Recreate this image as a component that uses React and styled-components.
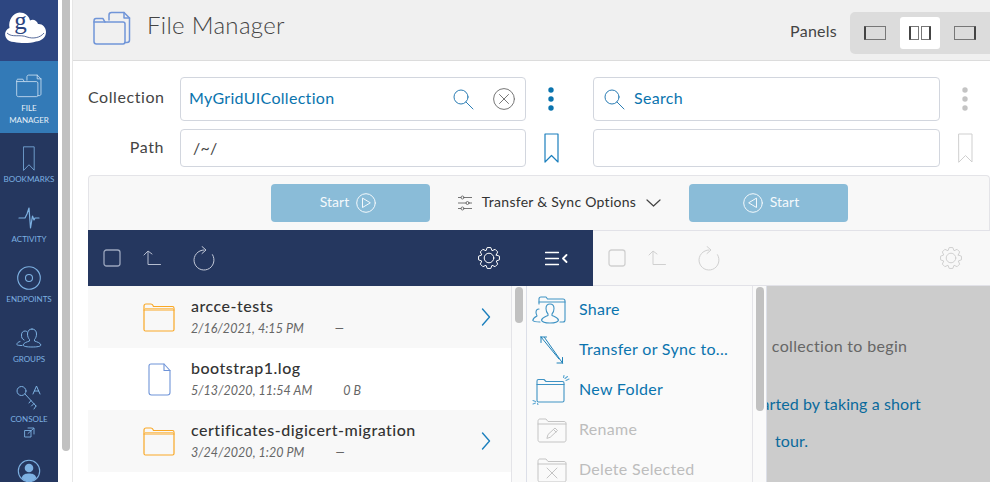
import React from "react";
import styled, { createGlobalStyle } from "styled-components";

const GlobalStyle = createGlobalStyle`
  html, body {
    margin: 0;
    height: 100%;
    overflow: hidden;
    background: #fff;
  }
  * { box-sizing: border-box; }
  body {
    font-family: Lato, "Open Sans", sans-serif;
    font-size: 16px;
    color: #333;
  }
`;

const Shell = styled.div`
  display: flex;
  width: 990px;
  height: 482px;
  overflow: hidden;
`;

const Lifted = styled.span`
  display: block;
  margin-bottom: ${(p) => p.$by || 3}px;
  ${(p) => p.$grow && "flex: 1;"}
`;

/* left nav */
const Sidebar = styled.nav`
  width: 58px;
  flex: none;
  background: #25375f;
  display: flex;
  flex-direction: column;
  align-items: stretch;
`;
const LogoBox = styled.div`
  height: 61px;
  background: #2d4681;
  flex: none;
`;
const NavItem = styled.div`
  height: ${(p) => p.$height || 60}px;
  flex: none;
  padding-top: 12px;
  display: flex;
  flex-direction: column;
  align-items: center;
  background: ${(p) => (p.$active ? "#337ab7" : "transparent")};
  color: ${(p) => (p.$active ? "#e6f0f8" : "#7db1e2")};
`;
const NavIcon = styled.div`
  height: 26px;
  display: flex;
  align-items: center;
  justify-content: center;
`;
const NavLabel = styled.div`
  margin-top: ${(p) => (p.$active ? 3 : 2)}px;
  font-size: 8px;
  line-height: 12px;
  text-align: center;
  text-transform: uppercase;
`;
const Avatar = styled.div`
  margin: 26px auto 0;
  flex: none;
`;

const Gutter = styled.div`
  width: 15px;
  flex: none;
  padding-left: 4px;
  border-right: 1px solid #e6e6e6;
`;
const PageThumb = styled.div`
  width: 8px;
  height: 451px;
  background: #c1c1c1;
  border-radius: 0 0 4px 4px;
`;

const Main = styled.main`
  flex: 1;
  min-width: 0;
  display: flex;
  flex-direction: column;
`;

/* header */
const Header = styled.header`
  height: 61px;
  flex: none;
  background: #f0f0f0;
  border-bottom: 1px solid #dcdcdc;
  display: flex;
  align-items: center;
  padding-left: 20px;
`;
const HeaderIcon = styled.div`
  margin-bottom: 4px;
`;
const Title = styled.h1`
  margin: 0 0 12px 16px;
  font-size: 24px;
  font-weight: 300;
  letter-spacing: 0.32px;
  color: #444;
`;
const PanelsLabel = styled.span`
  margin: 0 13px 0 auto;
  letter-spacing: 0.25px;
  color: #444;
`;
const PanelSwitch = styled.div`
  width: 140px;
  height: 42px;
  margin-top: 6px;
  padding: 5px;
  background: #dcdcdc;
  border-radius: 5px 0 0 5px;
  display: flex;
  gap: 5px;
`;
const PanelButton = styled.div`
  flex: 1;
  border-radius: 3px;
  display: flex;
  align-items: center;
  justify-content: center;
  background: ${(p) => (p.$active ? "#fff" : "transparent")};
`;

/* collection + path form */
const Form = styled.div`
  padding: 16px 0 8px 15px;
  display: grid;
  grid-template-columns: 76px 362px 50px 364px 50px;
  row-gap: 8px;
`;
const FieldLabel = styled.label`
  align-self: center;
  text-align: right;
  letter-spacing: 0.58px;
  color: #444;
  margin-bottom: ${(p) => p.$lift || 0}px;
`;
const Field = styled.div`
  height: ${(p) => p.$height}px;
  margin-left: ${(p) => p.$indent}px;
  border: 1px solid #d2d6de;
  border-radius: 4px;
  background: #fff;
  display: flex;
  align-items: center;
  padding-left: ${(p) => p.$pad || 8}px;
  padding-right: 10px;
  letter-spacing: 0.3px;
  color: ${(p) => p.$color || "#444"};
`;
const IconGap = styled.span`
  width: ${(p) => p.$width}px;
  flex: none;
`;
const SideAction = styled.div`
  display: flex;
  align-items: center;
  justify-content: center;
`;

const Workspace = styled.section`
  margin-left: 15px;
  flex: 1;
  min-height: 0;
  display: flex;
  flex-direction: column;
`;

/* transfer bar */
const TransferBar = styled.div`
  height: 55px;
  flex: none;
  padding: 8px 0 0 182px;
  background: #f8f8f8;
  border: 1px solid #e4e4e8;
  border-bottom: none;
  border-radius: 4px 4px 0 0;
  display: flex;
  align-items: flex-start;
`;
const StartButton = styled.div`
  width: 159px;
  height: 38px;
  padding: ${(p) => (p.$back ? "0 0 0 5px" : "0 5px 0 0")};
  background: #8abcd8;
  color: #f4f9fc;
  border-radius: 4px;
  font-size: 14px;
  display: flex;
  align-items: center;
  justify-content: center;
  gap: 7px;
`;
const OptionsToggle = styled.div`
  width: 259px;
  height: 38px;
  display: flex;
  align-items: center;
  justify-content: center;
  gap: 10px;
  font-size: 14px;
  letter-spacing: 0.27px;
  color: #333;
`;

/* panes */
const Panes = styled.div`
  flex: 1;
  min-height: 0;
  display: grid;
  grid-template-columns: 505px 397px;
`;
const Pane = styled.div`
  position: relative;
  display: flex;
  flex-direction: column;
  min-height: 0;
`;
const Toolbar = styled.div`
  height: 56px;
  flex: none;
  display: flex;
  align-items: center;
  padding: 0 ${(p) => p.$endPad}px 0 15px;
  background: ${(p) => (p.$off ? "#f8f8f8" : "#25375f")};
  border-top: ${(p) => (p.$off ? "1px solid #e2e2e8" : "none")};
  border-bottom: ${(p) => (p.$off ? "1px solid #e2e2e8" : "none")};
`;
const ToolSlot = styled.div`
  display: flex;
  align-items: center;
  justify-content: center;
  width: ${(p) => p.$width}px;
  margin-left: ${(p) => p.$gap || 0}px;
  margin-right: ${(p) => p.$after || 0}px;
  ${(p) => p.$push && "margin-left: auto;"}
`;
const PaneBody = styled.div`
  flex: 1;
  min-height: 0;
  display: flex;
`;
const FileList = styled.ul`
  width: 423px;
  margin: 0;
  padding: 0;
  list-style: none;
`;
const FileRow = styled.li`
  height: 62px;
  display: flex;
  align-items: center;
  padding: 0 20px 0 55px;
  background: ${(p) => (p.$odd ? "#f8f8f8" : "#fff")};
`;
const FileIcon = styled.div`
  width: 32px;
  flex: none;
  margin-right: 16px;
  display: flex;
  justify-content: center;
`;
const FileText = styled.div`
  flex: 1;
  min-width: 0;
  padding-bottom: 3px;
`;
const FileName = styled.div`
  font-size: 16px;
  font-weight: 500;
  line-height: 21px;
  letter-spacing: 0.5px;
  color: #333;
`;
const FileMeta = styled.div`
  margin-top: 5px;
  display: flex;
  gap: 31px;
  font-size: 12.5px;
  font-style: italic;
  line-height: 15px;
  letter-spacing: 0.05px;
  color: #666;
`;
const ScrollTrack = styled.div`
  width: ${(p) => p.$width}px;
  flex: none;
  padding: 1px 0 0 ${(p) => p.$left}px;
  background: #fafafa;
  border-left: 1px solid #e4e4e8;
  border-right: 1px solid #dcdfe8;
`;
const ScrollThumb = styled.div`
  width: 8px;
  height: ${(p) => p.$height}px;
  background: #c1c1c1;
  border-radius: 4px;
`;

/* actions menu, it sits over the right pane */
const ActionMenu = styled.div`
  position: absolute;
  left: 439px;
  top: 56px;
  bottom: 0;
  width: 240px;
  background: #fafafa;
  display: flex;
  z-index: 2;
`;
const MenuList = styled.ul`
  width: 225px;
  margin: 0;
  padding: 4px 0 0 5px;
  list-style: none;
  flex: none;
  overflow: hidden;
`;
const MenuItem = styled.li`
  height: 40px;
  display: flex;
  align-items: center;
  letter-spacing: 0.3px;
  color: ${(p) => (p.$off ? "#bdbdbd" : "#0a74ae")};
`;
const MenuIcon = styled.div`
  width: 47px;
  flex: none;
  display: flex;
  padding-left: ${(p) => p.$indent || 0}px;
`;

const EmptyPane = styled.div`
  flex: 1;
  background: #cccccc;
  padding-top: 41px;
  text-align: center;
  line-height: 37px;
`;
const EmptyText = styled.p`
  margin: 0 0 21px;
  padding-left: 47px;
  letter-spacing: 0.33px;
  color: #666;
`;
const EmptyLink = styled.p`
  margin: 0;
  letter-spacing: 0.1px;
  color: #0a6a9c;
`;

const Svg = styled.svg`
  display: block;
  fill: none;
  flex: none;
  stroke: ${(p) => p.$color || "currentColor"};
  stroke-width: ${(p) => p.$weight || 1};
  stroke-linecap: round;
  stroke-linejoin: round;
`;

/* ---------- drawings ---------- */

const Logo = () => (
  <svg width="58" height="61" viewBox="0 0 58 61">
    <path
      fill="#fff"
      d="M14 42C7 42 4 36 5.500 32C6.500 29.500 8 28.500 9.500 28C8 20 13 13 19.500 12.500C25 12.500 29 16 30 20.500C33 18.500 37 20.500 38 24C42 23.500 46 27 46 32C46 38 41 41 36 41.500C30 43.500 21 43.500 14 42Z"
    />
    <path
      d="M7 33C12 38 20 34 27 37C33 39 40 38 44 33"
      fill="none"
      stroke="#2d4681"
      strokeWidth="0.800"
    />
    <text
      x="20.500"
      y="29"
      fontFamily="'Liberation Serif', serif"
      fontSize="25"
      textAnchor="middle"
      fill="#2d4681"
    >
      g
    </text>
  </svg>
);

const FilesIcon = ({ color, size = 38, weight = 1 }) => (
  <Svg width={size} height={size * 0.9} viewBox="0 0 38 34" $color={color} $weight={weight * 1.5}>
    <path d="M16 9V4C16 2.500 17 1.500 18.500 1.500H31L36.500 7V29C36.500 30.500 35.500 31.500 34 31.500H32" />
    <path d="M31 1.500V7H36.500" />
    <path d="M1 11V30.500C1 32 2 33 3.500 33H30C31.500 33 32 32 32 30.500V13C32 12 31 11 30 11H12L10 7.500H3C1.500 7.500 1 8.500 1 10Z" />
    <path d="M1 11H12" />
  </Svg>
);

const BookmarkIcon = ({ color, weight = 1, w = 15, h = 30 }) => (
  <Svg width={w} height={h} viewBox="0 0 15 30" preserveAspectRatio="none" $color={color} $weight={weight}>
    <path d="M1 1H14V29L7.500 22.500L1 29Z" />
  </Svg>
);

const PulseIcon = () => (
  <Svg width="22" height="22" viewBox="0 0 22 22" $weight="1.2">
    <path d="M1 11H7L9 7L11 1L12.500 21L14.500 9L16 13L17 11H21" />
  </Svg>
);

const EndpointIcon = () => (
  <Svg width="24" height="24" viewBox="0 0 24 24" $weight="1.1">
    <circle cx="12" cy="12" r="11.300" />
    <circle cx="12" cy="12" r="3.500" />
  </Svg>
);

const GroupIcon = ({ color, width = 26 }) => (
  <Svg width={width} height={width * 0.77} viewBox="0 0 26 20" $color={color}>
    <path d="M8 12C6 11 5.500 9.500 5.500 7C5.500 4.500 7 3 9 3C9.500 3 10 3.100 10.500 3.300" />
    <path d="M4 13.500C2 14 1 15 0.800 16.500C1 17 2.500 17.500 6 17.500" />
    <path d="M16 1C13 1 11.500 3 11.500 6C11.500 8.500 12.500 10.500 13.500 11.500V13C11 14 8 14.500 7 17C7.500 18.500 11 19 16 19C21 19 24.500 18.500 25 17C24 14.500 21 14 18.500 13V11.500C19.500 10.500 20.500 8.500 20.500 6C20.500 3 19 1 16 1Z" />
  </Svg>
);

const ConsoleIcon = () => (
  <Svg width="26" height="26" viewBox="0 0 26 26">
    <circle cx="5.500" cy="6" r="4.500" />
    <path d="M9 9L20 21M15 15.500L13 18M18 18.500L15.500 21M20 21L18 24" />
    <path d="M17 9L20.500 1L24 9M18.300 6H22.700" />
  </Svg>
);

const ExternalIcon = () => (
  <Svg width="11" height="11" viewBox="0 0 11 11" $weight="0.9" style={{ marginTop: 2 }}>
    <path d="M1 3.500H7V10H1ZM4 1H10V7" />
    <path d="M4 6.500L9.500 1.500" />
  </Svg>
);

const UserIcon = () => (
  <svg width="24" height="24" viewBox="0 0 24 24">
    <circle cx="12" cy="12" r="10.700" fill="none" stroke="#7db1e2" strokeWidth="1.100" />
    <circle cx="12" cy="9" r="4.300" fill="#7db1e2" />
    <path d="M4.500 19C6 15 9 14.500 12 14.500C15 14.500 18 15 19.500 19C17.500 21.500 15 22.500 12 22.500C9 22.500 6.500 21.500 4.500 19Z" fill="#7db1e2" />
  </svg>
);

const SearchIcon = ({ color = "#2b7db4" }) => (
  <Svg width="21" height="21" viewBox="0 0 21 21" $color={color}>
    <circle cx="8" cy="8" r="7" />
    <path d="M13 13L20 20" />
  </Svg>
);

const ClearIcon = () => (
  <Svg width="22" height="22" viewBox="0 0 22 22" $color="#777">
    <circle cx="11" cy="11" r="10.400" />
    <path d="M6.500 6.500L15.500 15.500M15.500 6.500L6.500 15.500" />
  </Svg>
);

const DotsIcon = ({ color }) => (
  <svg width="6" height="24" viewBox="0 0 6 24">
    <circle cx="3" cy="3" r="2.700" fill={color} />
    <circle cx="3" cy="12" r="2.700" fill={color} />
    <circle cx="3" cy="21" r="2.700" fill={color} />
  </svg>
);

const PanelIcon = ({ kind }) => (
  <svg width="22" height="14" viewBox="0 0 22 14" fill="none" stroke="#777">
    {kind === "split" ? (
      <>
        <rect x="0.500" y="0.500" width="9" height="13" />
        <path d="M1 0.500V13.500" strokeWidth="2" stroke="#444" />
        <rect x="12.500" y="0.500" width="9" height="13" />
        <path d="M21 0.500V13.500" strokeWidth="2" stroke="#444" />
      </>
    ) : (
      <>
        <rect x="0.500" y="0.500" width="21" height="13" />
        <path d={kind === "left" ? "M1 0.500V13.500" : "M21 0.500V13.500"} strokeWidth="2" stroke="#444" />
      </>
    )}
  </svg>
);

const PlayIcon = ({ back }) => (
  <Svg width="20" height="20" viewBox="0 0 20 20" $color="#f4f9fc">
    <circle cx="10" cy="10" r="9.300" />
    <path d={back ? "M13.500 5.500V14.500L6 10Z" : "M6.500 5.500V14.500L14 10Z"} />
  </Svg>
);

const SlidersIcon = () => (
  <Svg width="14" height="16" viewBox="0 0 14 16" $color="#666" $weight="0.9">
    <path d="M0 2.500H3M6 2.500H14M0 8H8M11 8H14M0 13.500H3M6 13.500H14" />
    <circle cx="4.500" cy="2.500" r="1.500" />
    <circle cx="9.500" cy="8" r="1.500" />
    <circle cx="4.500" cy="13.500" r="1.500" />
  </Svg>
);

const ChevronDown = () => (
  <Svg width="15" height="8" viewBox="0 0 15 8" $color="#444" $weight="1.200">
    <path d="M1 1L7.500 7L14 1" />
  </Svg>
);

const CheckIcon = ({ color }) => (
  <Svg width="18" height="18" viewBox="0 0 18 18" $color={color} $weight="1.300">
    <rect x="1" y="1" width="16" height="16" rx="2.500" />
  </Svg>
);

const UpIcon = ({ color }) => (
  <Svg width="18" height="16" viewBox="0 0 18 16" $color={color}>
    <path d="M1 5L5 1L9 4M5 1.500V14.500H17.500" />
  </Svg>
);

const RefreshIcon = ({ color }) => (
  <Svg width="22" height="25" viewBox="0 0 22 25" $color={color}>
    <path d="M19.500 8.700A10 10 0 1 1 11 4" />
    <path d="M9 0.500L13 4L9 7.500" />
  </Svg>
);

// cog with 8 teeth, the points come from a loop instead of a long path string
const gearPath = () => {
  const pts = [];
  for (let i = 0; i < 8; i++) {
    const a = (i * Math.PI) / 4;
    [
      [-0.39, 7.9],
      [-0.17, 10.6],
      [0.17, 10.6],
      [0.39, 7.9],
    ].forEach(([da, r]) => {
      pts.push(`${(12 + r * Math.cos(a + da)).toFixed(2)} ${(12 + r * Math.sin(a + da)).toFixed(2)}`);
    });
  }
  return `M${pts.join("L")}Z`;
};

const GearIcon = ({ color }) => (
  <Svg width="24" height="24" viewBox="0 0 24 24" $color={color}>
    <path d={gearPath()} />
    <circle cx="12" cy="12" r="4.800" />
  </Svg>
);

const MenuToggle = () => (
  <Svg width="23" height="15" viewBox="0 0 23 15" $color="#fff" $weight="1.300">
    <path d="M0.500 1.500H13.500M0.500 7.500H13.500M0.500 13.500H13.500" />
    <path d="M21.500 4L18 7.500L21.500 11" strokeWidth="1.800" />
  </Svg>
);

const FolderIcon = () => (
  <Svg width="32" height="29" viewBox="0 0 32 29" $color="#f9a826" $weight="1.200">
    <path d="M1 3C1 1.800 1.800 1 3 1H8C9 1 10 2 10.500 3.500H29.500C30.500 3.500 31 4.200 31 5.200V26.500C31 27.500 30.300 28 29.500 28H2.500C1.500 28 1 27.500 1 26.500Z" />
    <path d="M1 7H31" />
    <path d="M1 5.500H31" stroke="#fbc874" />
  </Svg>
);

const DocIcon = () => (
  <Svg width="23" height="33" viewBox="0 0 23 33" $color="#6f94d8" $weight="1.100">
    <path d="M3 1H16L22 7.500V29.500C22 31 21 32 19.500 32H3.500C2 32 1 31 1 29.500V3C1 1.800 1.800 1 3 1Z" />
    <path d="M16 1V7.500H22" />
  </Svg>
);

const ChevronRight = () => (
  <Svg width="10" height="18" viewBox="0 0 10 18" $color="#1b7fbd" $weight="1.400">
    <path d="M1.500 1L8.500 9L1.500 17" />
  </Svg>
);

const ShareIcon = () => (
  <Svg width="34" height="29" viewBox="0 0 34 29" $color="#3f93c4" $weight="1.100">
    <path d="M7 8V3C7 1.800 7.800 1 9 1H14L15.500 3H31C32.200 3 33 3.800 33 5V24C33 25.200 32.200 26 31 26H28" />
    <path d="M7 6H33" />
    <path d="M18 8C15.500 8 14 10 14 12.500C14 15 15 17 16 18V19.500C13.500 20.500 10.500 21 9.500 24C10 26 13 27 18 27C23 27 26 26 26.500 24C25.500 21 22.500 20.500 20 19.500V18C21 17 22 15 22 12.500C22 10 20.500 8 18 8Z" />
    <path d="M7 13C5 13 4 14.500 4 16.500C4 18 5 19 5 20C3 21 1 22 0.800 24.500C2 26 5 26 8 26" />
  </Svg>
);

const TransferIcon = () => (
  <Svg width="24" height="29" viewBox="0 0 24 29" $color="#1f81b8">
    <path d="M1 1L19 23M1 1V6.500M1 1H6.500" />
    <path d="M4.500 1.500L22.500 27M22.500 27V21.500M22.500 27H17" />
  </Svg>
);

const NewFolderIcon = () => (
  <Svg width="38" height="30" viewBox="0 0 38 30" $color="#3f93c4" $weight="1.100">
    <path d="M5 6C5 5 5.800 4.500 6.500 4.500H12L14 6.500H30.500C31.500 6.500 32 7.200 32 8V25.500C32 26.500 31.500 27 30.500 27H6.500C5.500 27 5 26.500 5 25.500Z" />
    <path d="M5 9.500H32" />
    <path d="M34 5.500L37 4M31.500 2.500L32 0.500M33 3.500L35.500 1.500M3.500 28L1 29M1 25.500L3.500 26.500M5.500 28.500L6 30" stroke="#5aa6d1" />
  </Svg>
);

const DisabledFolder = ({ cross }) => (
  <Svg width="30" height="25" viewBox="0 0 30 25" $color="#c4c4c4">
    <path d="M1 3C1 1.800 1.800 1 3 1H9L11 3.500H27C28.200 3.500 29 4.200 29 5.500V22C29 23.200 28.200 24 27 24H3C1.800 24 1 23.200 1 22Z" />
    <path d="M1 6H29" />
    {cross ? (
      <path d="M10 10L20 20M20 10L10 20" />
    ) : (
      <path d="M10 20L11 16.500L18 10L20.500 12.500L13.500 19ZM16.500 11.500L19 14" />
    )}
  </Svg>
);

const files = [
  { name: "arcce-tests", date: "2/16/2021, 4:15 PM", size: "—", folder: true },
  { name: "bootstrap1.log", date: "5/13/2020, 11:54 AM", size: "0 B" },
  { name: "certificates-digicert-migration", date: "3/24/2020, 1:20 PM", size: "—", folder: true },
  { name: "", date: "", size: "", blank: true },
];

const GRAY = "#d0d0d0";

export default function App() {
  return (
    <Shell>
      <GlobalStyle />
      <Sidebar>
        <LogoBox>
          <Logo />
        </LogoBox>
        <NavItem $active $height={72}>
          <NavIcon>
            <FilesIcon color="#cfe2f3" size={26} weight={0.8} />
          </NavIcon>
          <NavLabel $active>
            File
            <br />
            Manager
          </NavLabel>
        </NavItem>
        <NavItem>
          <NavIcon>
            <BookmarkIcon w={12} h={25} />
          </NavIcon>
          <NavLabel>Bookmarks</NavLabel>
        </NavItem>
        <NavItem>
          <NavIcon>
            <PulseIcon />
          </NavIcon>
          <NavLabel>Activity</NavLabel>
        </NavItem>
        <NavItem>
          <NavIcon>
            <EndpointIcon />
          </NavIcon>
          <NavLabel>Endpoints</NavLabel>
        </NavItem>
        <NavItem>
          <NavIcon>
            <GroupIcon />
          </NavIcon>
          <NavLabel>Groups</NavLabel>
        </NavItem>
        <NavItem>
          <NavIcon>
            <ConsoleIcon />
          </NavIcon>
          <NavLabel>Console</NavLabel>
          <ExternalIcon />
        </NavItem>
        <Avatar>
          <UserIcon />
        </Avatar>
      </Sidebar>

      <Gutter>
        <PageThumb />
      </Gutter>

      <Main>
        <Header>
          <HeaderIcon>
            <FilesIcon color="#7095d8" size={38} />
          </HeaderIcon>
          <Title>File Manager</Title>
          <PanelsLabel>Panels</PanelsLabel>
          <PanelSwitch>
            <PanelButton>
              <PanelIcon kind="left" />
            </PanelButton>
            <PanelButton $active>
              <PanelIcon kind="split" />
            </PanelButton>
            <PanelButton>
              <PanelIcon kind="right" />
            </PanelButton>
          </PanelSwitch>
        </Header>

        <Form>
          <FieldLabel $lift={6}>Collection</FieldLabel>
          <Field $height={44} $indent={16} $color="#0a74ae">
            <Lifted $by={4} $grow>
              MyGridUICollection
            </Lifted>
            <SearchIcon />
            <IconGap $width={19} />
            <ClearIcon />
          </Field>
          <SideAction>
            <DotsIcon color="#0a74ae" />
          </SideAction>
          <Field $height={44} $indent={17} $pad={10} $color="#0a74ae">
            <SearchIcon />
            <IconGap $width={9} />
            <Lifted $by={4} $grow>
              Search
            </Lifted>
          </Field>
          <SideAction>
            <DotsIcon color="#c4c4c4" />
          </SideAction>

          <FieldLabel $lift={3}>Path</FieldLabel>
          <Field $height={38} $indent={16} $pad={12}>
            <Lifted $by={2}>/~/</Lifted>
          </Field>
          <SideAction>
            <BookmarkIcon color="#1b7fbd" weight={1.2} />
          </SideAction>
          <Field $height={38} $indent={17} />
          <SideAction>
            <BookmarkIcon color="#cfcfcf" />
          </SideAction>
        </Form>

        <Workspace>
          <TransferBar>
            <StartButton>
              <Lifted $by={3}>Start</Lifted>
              <PlayIcon />
            </StartButton>
            <OptionsToggle>
              <SlidersIcon />
              <Lifted $by={3}>Transfer &amp; Sync Options</Lifted>
              <ChevronDown />
            </OptionsToggle>
            <StartButton $back>
              <PlayIcon back />
              <Lifted $by={3}>Start</Lifted>
            </StartButton>
          </TransferBar>

          <Panes>
            <Pane>
              <Toolbar $endPad={25}>
                <ToolSlot $width={18}>
                  <CheckIcon color="#9aa5bd" />
                </ToolSlot>
                <ToolSlot $width={18} $gap={22}>
                  <UpIcon color="#b5bdd0" />
                </ToolSlot>
                <ToolSlot $width={22} $gap={32}>
                  <RefreshIcon color="#c3c9d8" />
                </ToolSlot>
                <ToolSlot $width={24} $push $after={44}>
                  <GearIcon color="#fff" />
                </ToolSlot>
                <ToolSlot $width={23}>
                  <MenuToggle />
                </ToolSlot>
              </Toolbar>
              <PaneBody>
                <FileList>
                  {files.map((f, i) => (
                    <FileRow key={i} $odd={i % 2 === 0}>
                      {!f.blank && (
                        <>
                          <FileIcon>{f.folder ? <FolderIcon /> : <DocIcon />}</FileIcon>
                          <FileText>
                            <FileName>{f.name}</FileName>
                            <FileMeta>
                              <span>{f.date}</span>
                              <span>{f.size}</span>
                            </FileMeta>
                          </FileText>
                          {f.folder && <ChevronRight />}
                        </>
                      )}
                    </FileRow>
                  ))}
                </FileList>
                <ScrollTrack $width={16} $left={3}>
                  <ScrollThumb $height={36} />
                </ScrollTrack>
              </PaneBody>
              <ActionMenu>
                <MenuList>
                  <MenuItem>
                    <MenuIcon>
                      <ShareIcon />
                    </MenuIcon>
                    <Lifted $by={4}>Share</Lifted>
                  </MenuItem>
                  <MenuItem>
                    <MenuIcon $indent={8}>
                      <TransferIcon />
                    </MenuIcon>
                    <Lifted $by={4}>Transfer or Sync to...</Lifted>
                  </MenuItem>
                  <MenuItem>
                    <MenuIcon>
                      <NewFolderIcon />
                    </MenuIcon>
                    <Lifted $by={4}>New Folder</Lifted>
                  </MenuItem>
                  <MenuItem $off>
                    <MenuIcon $indent={5}>
                      <DisabledFolder />
                    </MenuIcon>
                    <Lifted $by={4}>Rename</Lifted>
                  </MenuItem>
                  <MenuItem $off>
                    <MenuIcon $indent={5}>
                      <DisabledFolder cross />
                    </MenuIcon>
                    <Lifted $by={4}>Delete Selected</Lifted>
                  </MenuItem>
                </MenuList>
                <ScrollTrack $width={15} $left={3}>
                  <ScrollThumb $height={124} />
                </ScrollTrack>
              </ActionMenu>
            </Pane>

            <Pane>
              <Toolbar $off $endPad={27}>
                <ToolSlot $width={18}>
                  <CheckIcon color={GRAY} />
                </ToolSlot>
                <ToolSlot $width={18} $gap={22}>
                  <UpIcon color={GRAY} />
                </ToolSlot>
                <ToolSlot $width={22} $gap={32}>
                  <RefreshIcon color={GRAY} />
                </ToolSlot>
                <ToolSlot $width={24} $push>
                  <GearIcon color={GRAY} />
                </ToolSlot>
              </Toolbar>
              <EmptyPane>
                <EmptyText>Find a collection to begin</EmptyText>
                <EmptyLink>
                  You can get started by taking a short
                  <br />
                  tour.
                </EmptyLink>
              </EmptyPane>
            </Pane>
          </Panes>
        </Workspace>
      </Main>
    </Shell>
  );
}
